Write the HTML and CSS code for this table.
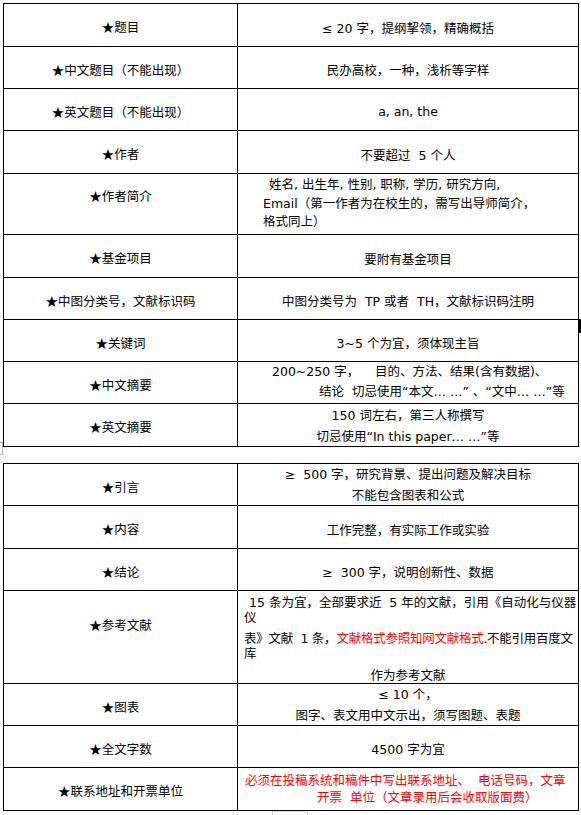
FILE: index.html
```html
<!DOCTYPE html>
<html lang="zh">
<head>
<meta charset="utf-8">
<title>投稿要求</title>
<link rel="stylesheet" href="styles.css">
</head>
<body>
<div class="page">
  <div class="sheet sheet-one">
    <div class="cell label">★题目</div>
    <div class="cell value">≤ 20 字，提纲挈领，精确概括</div>

    <div class="cell label">★中文题目（不能出现）</div>
    <div class="cell value">民办高校，一种，浅析等字样</div>

    <div class="cell label">★英文题目（不能出现）</div>
    <div class="cell value">a, an, the</div>

    <div class="cell label">★作者</div>
    <div class="cell value">不要超过&nbsp;&nbsp;5 个人</div>

    <div class="cell label label-author">★作者简介</div>
    <div class="cell value top author">
      <div class="author-first">姓名, 出生年, 性别, 职称, 学历, 研究方向,</div>
      <div>Email（第一作者为在校生的，需写出导师简介，</div>
      <div>格式同上）</div>
    </div>

    <div class="cell label">★基金项目</div>
    <div class="cell value">要附有基金项目</div>

    <div class="cell label">★中图分类号，文献标识码</div>
    <div class="cell value">中图分类号为&nbsp;&nbsp;TP 或者&nbsp;&nbsp;TH，文献标识码注明</div>

    <div class="cell label">★关键词</div>
    <div class="cell value">3~5 个为宜，须体现主旨</div>

    <div class="cell label">★中文摘要</div>
    <div class="cell value top cn-abstract">
      <div class="cn-abs-1">200~250 字，&nbsp;&nbsp;&nbsp;&nbsp;目的、方法、结果(含有数据)、</div>
      <div class="cn-abs-2">结论&nbsp;&nbsp;切忌使用“本文… …” 、“文中… …”等</div>
    </div>

    <div class="cell label">★英文摘要</div>
    <div class="cell value top en-abstract">
      <div>150 词左右，第三人称撰写</div>
      <div>切忌使用“In this paper… …”等</div>
    </div>
    <span class="mark-bar"></span>
  </div>

  <span class="mark-bracket"></span>

  <div class="sheet sheet-two">
    <div class="cell label">★引言</div>
    <div class="cell value top intro">
      <div>≥&nbsp;&nbsp;500 字，研究背景、提出问题及解决目标</div>
      <div>不能包含图表和公式</div>
    </div>

    <div class="cell label">★内容</div>
    <div class="cell value">工作完整，有实际工作或实验</div>

    <div class="cell label">★结论</div>
    <div class="cell value">≥&nbsp;&nbsp;300 字，说明创新性、数据</div>

    <div class="cell label label-refs">★参考文献</div>
    <div class="cell value top refs">
      <div class="refs-first">15 条为宜，全部要求近&nbsp;&nbsp;5 年的文献，引用《自动化与仪器</div>
      <div class="refs-wrap">仪</div>
      <div class="refs-para">表》文献&nbsp;&nbsp;1 条，<span class="red">文献格式参照知网文献格式</span>.不能引用百度文</div>
      <div class="refs-wrap">库</div>
      <div class="refs-center">作为参考文献</div>
    </div>

    <div class="cell label">★图表</div>
    <div class="cell value top figures">
      <div>≤ 10 个，</div>
      <div>图字、表文用中文示出，须写图题、表题</div>
    </div>

    <div class="cell label">★全文字数</div>
    <div class="cell value">4500 字为宜</div>

    <div class="cell label">★联系地址和开票单位</div>
    <div class="cell value top contact red">
      <div>必须在投稿系统和稿件中写出联系地址、&nbsp;&nbsp;电话号码，文章</div>
      <div class="contact-2">开票&nbsp;&nbsp;单位（文章录用后会收取版面费）</div>
    </div>
    <span class="mark-side"></span>
  </div>
  <span class="mark-bottom"></span>
</div>
</body>
</html>
```

FILE: styles.css
```css
html, body {
  margin: 0;
  padding: 0;
  background: #ffffff;
}

body {
  font-family: "DejaVu Sans", "Noto Sans CJK SC", sans-serif;
  font-size: 12.5px;
  color: #000000;
}

.page {
  position: relative;
  width: 581px;
  height: 815px;
  padding: 3px 0 0 3px;
  box-sizing: border-box;
}

.sheet {
  position: relative;
  display: grid;
  grid-template-columns: 233px 340px;
  gap: 1px;
  padding: 1px;
  width: 576px;
  box-sizing: border-box;
  background: #000000;
}

.sheet-one {
  grid-template-rows: 42px 41px 41px 42px 60px 42px 41px 41px 41px 42px;
}

.sheet-two {
  margin-top: 16px;
  grid-template-rows: 41px 42px 41px 92px 41px 41px 42px;
}

.cell {
  background: #ffffff;
  display: flex;
  flex-direction: column;
  justify-content: center;
  align-items: center;
  padding-top: 4px;
  box-sizing: border-box;
  white-space: nowrap;
  overflow: hidden;
}

.label {
  font-family: "Noto Sans CJK SC", sans-serif;
  padding-top: 3px;
}

.label-author {
  padding-top: 0;
  padding-bottom: 17px;
}

.label-refs {
  padding-top: 0;
  padding-bottom: 26px;
}

.value.top {
  justify-content: flex-start;
}

.author {
  align-items: flex-start;
  padding: 2px 0 0 25px;
  line-height: 18.5px;
}

.author-first {
  margin-left: 6px;
}

.cn-abstract {
  align-items: flex-start;
  padding-top: 0;
  line-height: 20px;
}

.cn-abs-1 {
  margin-left: 34px;
}

.cn-abs-2 {
  margin-left: 81px;
}

.en-abstract {
  padding-top: 1px;
  line-height: 21px;
}

.intro {
  padding-top: 0;
  line-height: 21px;
}

.refs {
  align-items: flex-start;
  padding: 4px 0 0 6px;
  line-height: 15px;
}

.refs-first {
  margin-left: 5px;
}

.refs-para {
  margin-top: 6px;
  letter-spacing: -0.25px;
}

.refs-center {
  align-self: stretch;
  text-align: center;
  margin-top: 7px;
  padding-right: 6px;
}

.figures {
  padding-top: 0;
  line-height: 21px;
}

.contact {
  align-items: flex-start;
  padding: 4px 0 0 7px;
  line-height: 17px;
}

.contact-2 {
  margin-left: 72px;
}

.red {
  color: #ff0000;
}

.mark-bar {
  position: absolute;
  right: -3px;
  top: 316px;
  width: 3px;
  height: 14px;
  background: #000000;
}

.mark-bracket {
  position: absolute;
  left: 0;
  top: 442px;
  width: 2px;
  height: 11px;
  border: 1px solid #b5b5b5;
  border-left: none;
}

.mark-side {
  position: absolute;
  right: -3px;
  top: 186px;
  width: 1px;
  height: 10px;
  background: #c8c8c8;
}

.mark-bottom {
  position: absolute;
  left: 272px;
  top: 811px;
  width: 36px;
  height: 4px;
  border-left: 1px solid #c8c8c8;
  border-right: 1px solid #c8c8c8;
  border-top: 1px solid #e0e0e0;
  box-sizing: border-box;
}
```
